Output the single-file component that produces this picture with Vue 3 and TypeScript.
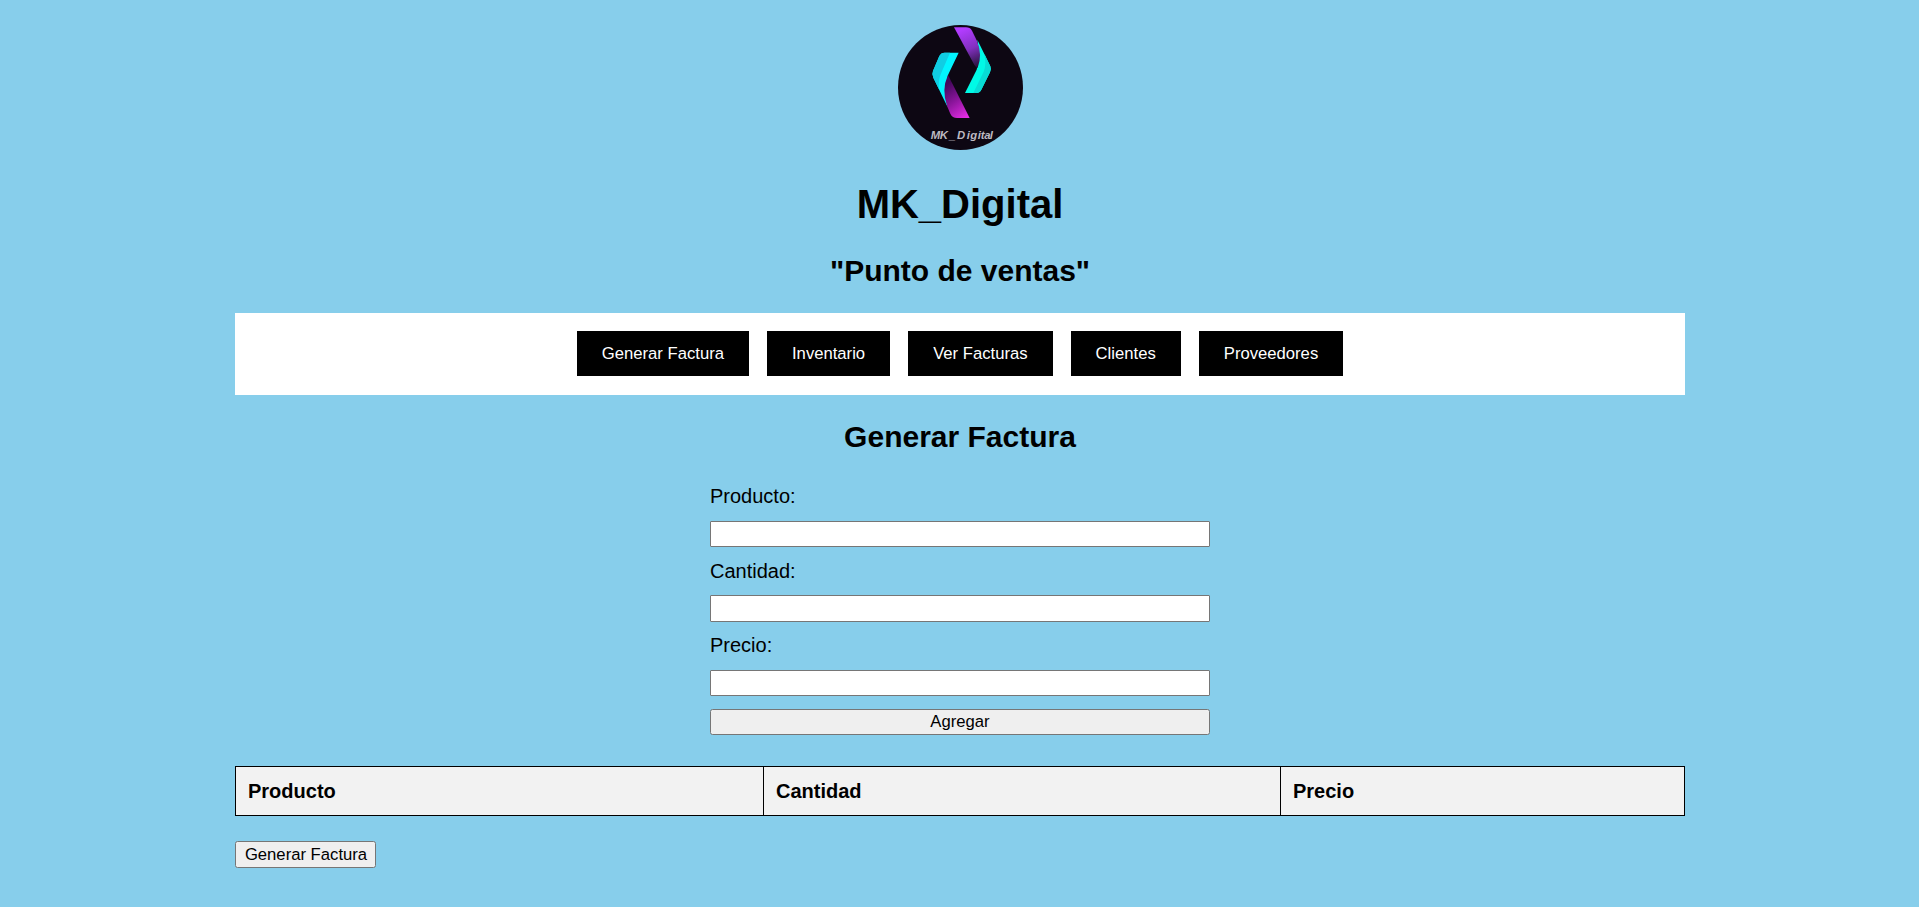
<script setup lang="ts">
import { reactive } from 'vue'

interface Field {
  id: 'producto' | 'cantidad' | 'precio'
  label: string
}

const sections: string[] = ['Generar Factura', 'Inventario', 'Ver Facturas', 'Clientes', 'Proveedores']

const fields: Field[] = [
  { id: 'producto', label: 'Producto' },
  { id: 'cantidad', label: 'Cantidad' },
  { id: 'precio', label: 'Precio' },
]

const form = reactive({ producto: '', cantidad: '', precio: '' })
const items = reactive<{ producto: string; cantidad: string; precio: string }[]>([])

function addItem(): void {
  items.push({ ...form })
  form.producto = form.cantidad = form.precio = ''
}
</script>

<template>
  <div class="page">
    <header class="header">
      <svg class="logo" viewBox="24 30 375 375" role="img" aria-label="MK_Digital">
        <defs>
          <linearGradient id="ribbon-top" x1="215" y1="45" x2="264" y2="158" gradientUnits="userSpaceOnUse">
            <stop offset="0" stop-color="#b23cff" />
            <stop offset="0.5" stop-color="#8230c0" />
            <stop offset="1" stop-color="#201030" />
          </linearGradient>
          <linearGradient id="ribbon-bottom" x1="165" y1="210" x2="232" y2="305" gradientUnits="userSpaceOnUse">
            <stop offset="0" stop-color="#43085c" />
            <stop offset="0.5" stop-color="#8e169e" />
            <stop offset="1" stop-color="#e42ce4" />
          </linearGradient>
        </defs>
        <circle cx="211.5" cy="217.5" r="187.5" fill="#0d0713" />
        <path d="M262 74 L301 154 Q305 162 300 172 L274 224 Q269 234 258 234 H225 L260 164 Q272 126 262 74Z" fill="#00fae6" />
        <path d="M283 116 L301 154 Q305 162 300 172 L274 224 Q269 234 258 234 H250 L281 170 Q290 148 283 116Z" fill="#08dcd5" />
        <path d="M192 37 H228 Q240 37 246 47 L261 78 Q278 120 263 158 Q259 160 252 148Z" fill="url(#ribbon-top)" />
        <path d="M206 113 H164 Q153 113 148 123 L129 168 Q125 177 130 188 L173 277 Q160 226 174 180Z" fill="#02f4ff" />
        <path d="M180 113 H164 Q153 113 148 123 L129 168 Q125 177 130 188 L147 223 Q144 198 152 178Z" fill="#10cde3" />
        <path d="M174 180 L239 309 H201 Q187 309 181 296 L172 275 Q153 225 174 180Z" fill="url(#ribbon-bottom)" />
        <text class="logo-text" y="371" x="122 149 178 201 230 241 263 272 283 299">MK_Digital</text>
      </svg>
      <h1>MK_Digital</h1>
      <h2>"Punto de ventas"</h2>
    </header>

    <nav class="nav">
      <button v-for="name in sections" :key="name" class="nav-button" type="button">{{ name }}</button>
    </nav>

    <main>
      <h2>Generar Factura</h2>
      <form class="form" @submit.prevent="addItem">
        <template v-for="field in fields" :key="field.id">
          <label class="label" :for="field.id">{{ field.label }}:</label>
          <input :id="field.id" v-model="form[field.id]" class="input" type="text" />
        </template>
        <button class="button" type="submit">Agregar</button>
      </form>

      <table class="table">
        <colgroup>
          <col class="col-product" />
          <col class="col-quantity" />
          <col />
        </colgroup>
        <thead>
          <tr>
            <th v-for="field in fields" :key="field.id">{{ field.label }}</th>
          </tr>
        </thead>
        <tbody>
          <tr v-for="(item, index) in items" :key="index">
            <td v-for="field in fields" :key="field.id">{{ item[field.id] }}</td>
          </tr>
        </tbody>
      </table>

      <button class="button button-invoice" type="button">Generar Factura</button>
    </main>
  </div>
</template>

<style>
body {
  margin: 0;
  background: skyblue;
}
</style>

<style scoped>
.page {
  box-sizing: border-box;
  width: 1450px;
  min-height: 907px;
  margin: 0 auto 0 calc(50% - 724.5px);
  padding-top: 25px;
  color: #000;
  font: 20px "Liberation Sans", Arial, sans-serif;
}

.header {
  display: flex;
  flex-direction: column;
  align-items: center;
}

.logo {
  width: 125px;
  height: 125px;
  margin-left: 1px;
}

.logo-text {
  fill: #bdb9c1;
  font: italic bold 34px "Liberation Sans", Arial, sans-serif;
}

h1 {
  margin: 32px 0 27px;
  font-size: 40px;
  line-height: 45px;
}

h2 {
  margin: 0 0 25px;
  font-size: 30px;
  line-height: 34px;
  text-align: center;
}

.nav {
  box-sizing: border-box;
  display: flex;
  justify-content: center;
  gap: 18px;
  height: 82px;
  margin-bottom: 25px;
  padding: 18px 0 19px;
  background: #fff;
}

.nav-button {
  padding: 0 25px;
  border: 0;
  background: #000;
  color: #fff;
  font: 16.667px "Liberation Sans", Arial, sans-serif;
}

.form {
  display: flex;
  flex-direction: column;
  gap: 12.5px;
  width: 500px;
  margin: 31.3px auto 30.7px;
}

.label {
  line-height: 23px;
}

.input,
.button {
  box-sizing: border-box;
  height: 26.5px;
  margin: 0;
  border: 1px solid #767676;
  border-radius: 2.5px;
  font: 16.667px "Liberation Sans", Arial, sans-serif;
}

.input {
  padding: 1px 3px;
  border-radius: 1px;
  background: #fff;
}

.button {
  padding: 0;
  background: #efefef;
  color: #000;
}

.table {
  width: 1450px;
  height: 50px;
  margin-bottom: 25px;
  border-collapse: collapse;
  table-layout: fixed;
}

.col-product {
  width: 528px;
}

.col-quantity {
  width: 517px;
}

th,
td {
  box-sizing: border-box;
  height: 49px;
  padding: 2px 12px 0;
  border: 1px solid #000;
  text-align: left;
}

th {
  background: #f2f2f2;
}

.button-invoice {
  display: block;
  width: 141px;
  height: 27px;
  padding: 1px 0 0 1px;
}
</style>
